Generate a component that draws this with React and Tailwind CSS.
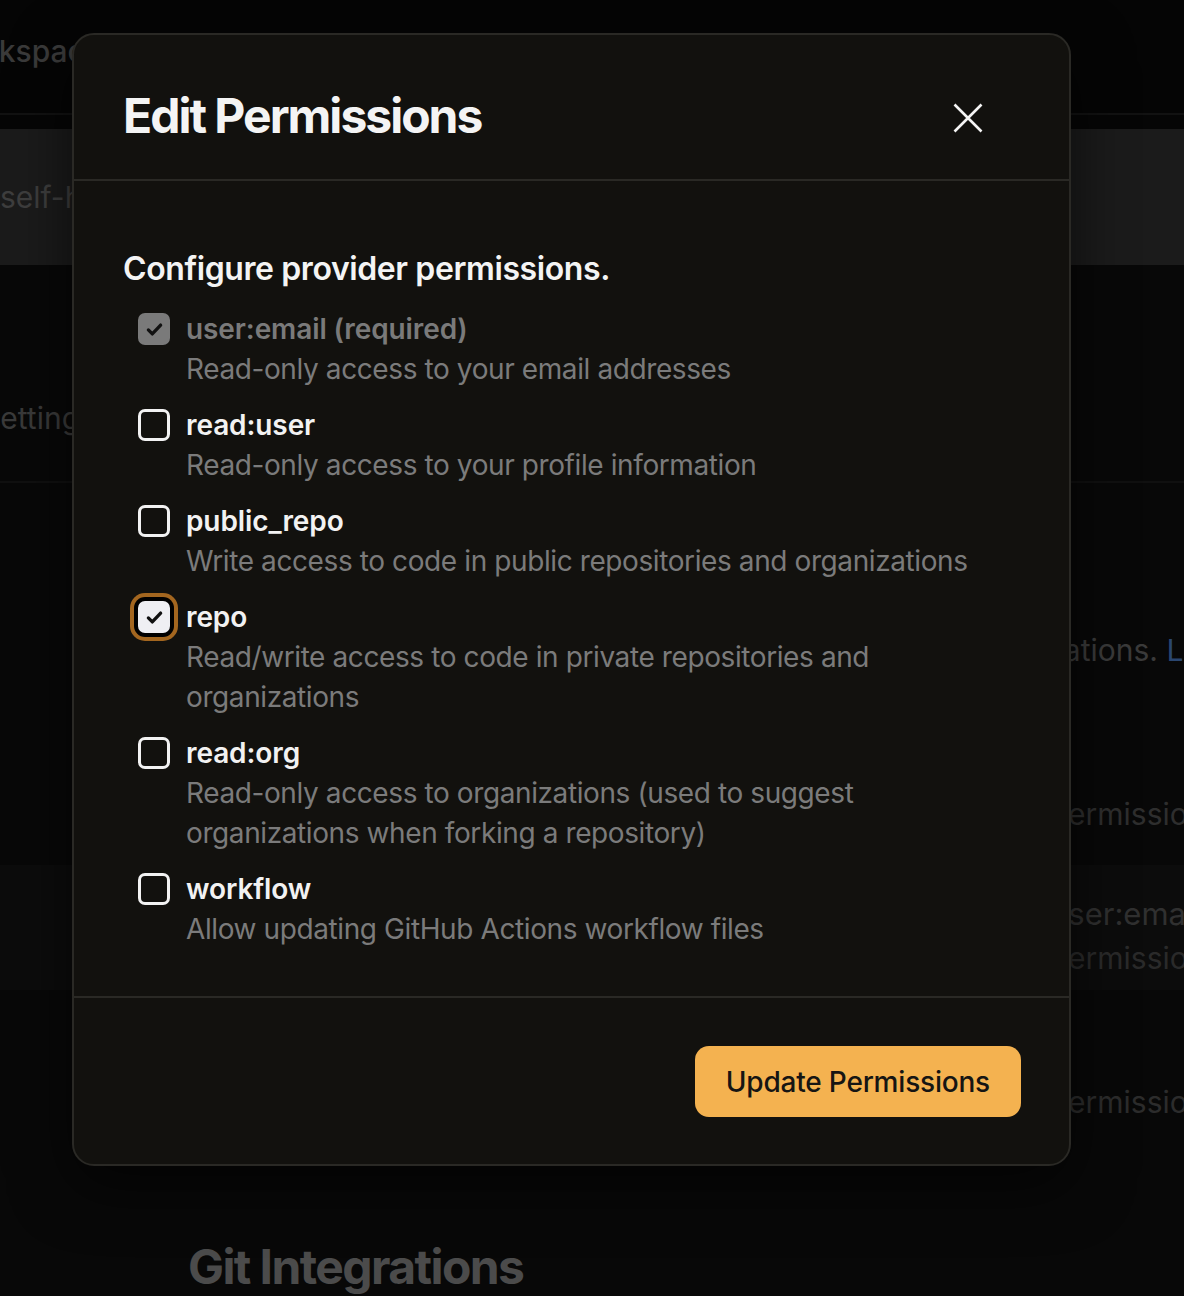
import React from "react";

const items = [
  { name: "user:email (required)", desc: "Read-only access to your email addresses", state: "disabled" },
  { name: "read:user", desc: "Read-only access to your profile information", state: "off" },
  { name: "public_repo", desc: "Write access to code in public repositories and organizations", state: "off" },
  { name: "repo", desc: "Read/write access to code in private repositories and organizations", state: "focused" },
  { name: "read:org", desc: "Read-only access to organizations (used to suggest organizations when forking a repository)", state: "off" },
  { name: "workflow", desc: "Allow updating GitHub Actions workflow files", state: "off" },
];

function Check({ color }) {
  return (
    <svg width="21" height="21" viewBox="0 0 24 24" fill="none">
      <path d="M5 12.5 L9.5 17 L19 7" stroke={color} strokeWidth="3.8" strokeLinecap="round" strokeLinejoin="round" />
    </svg>
  );
}

function Box({ state }) {
  if (state === "disabled") {
    return (
      <div className="w-[32px] h-[32px] rounded-[7px] bg-[#7a7a7a] flex items-center justify-center shrink-0 mt-[4px]">
        <Check color="#111111" />
      </div>
    );
  }
  if (state === "focused") {
    return (
      <div className="w-[32px] h-[32px] rounded-[7px] bg-[#efeff3] flex items-center justify-center shrink-0 mt-[4px] ring-4 ring-[#a3661f] ring-offset-4 ring-offset-black">
        <Check color="#111111" />
      </div>
    );
  }
  return <div className="w-[32px] h-[32px] rounded-[7px] border-[3px] border-[#f2f2f2] shrink-0 mt-[4px]" />;
}

export default function App() {
  return (
    <div
      className="relative w-[1184px] h-[1296px] overflow-hidden bg-[#080808] text-[#3a3a3a]"
      style={{ fontFamily: "Inter, 'Noto Sans', sans-serif" }}
    >
      {/* background page */}
      <div className="flex flex-col">
        <div className="h-[113px] bg-[#050505] flex items-center pb-[12px]">
          <span className="ml-[-60px] text-[30px] font-medium text-[#3a3a3a] whitespace-nowrap leading-[40px]">Workspaces</span>
        </div>
        <div className="h-[2px] bg-[#121212]" />
        <div className="h-[14px] bg-[#060606]" />
        <div className="h-[136px] bg-[#1b1b1b] flex items-center">
          <span className="text-[30px] text-[#3e3e3e] whitespace-nowrap leading-[40px]">self-hosted</span>
        </div>
        <div className="h-[218px] flex flex-col justify-end pb-[43px] border-b-2 border-[#101010]">
          <span className="ml-[-19px] text-[30px] text-[#3a3a3a] whitespace-nowrap leading-[40px]">Settings</span>
        </div>
        <div className="h-[382px] flex flex-col pt-[147px] gap-[124px]">
          <span className="ml-[1040px] text-[30px] text-[#3a3a3a] whitespace-nowrap leading-[40px]">
            izations. <span className="text-[#2a4670]">Learn more</span>
          </span>
          <span className="ml-[1049px] text-[30px] text-[#2e2e2e] whitespace-nowrap leading-[40px]">Permissions</span>
        </div>
        <div className="h-[125px] bg-[#0c0c0c] flex flex-col pt-[29px] gap-[4px]">
          <span className="ml-[1050px] text-[31px] text-[#303030] whitespace-nowrap leading-[40px]">user:email</span>
          <span className="ml-[1049px] text-[30px] text-[#2a2a2a] whitespace-nowrap leading-[40px]">Permissions</span>
        </div>
        <div className="h-[306px] flex flex-col pt-[92px] gap-[117px]">
          <span className="ml-[1049px] text-[30px] text-[#2c2c2c] whitespace-nowrap leading-[40px]">Permissions</span>
          <span className="ml-[188px] text-[48px] font-bold text-[#4b4b4b] whitespace-nowrap leading-[56px] tracking-[-1.6px]">Git Integrations</span>
        </div>
      </div>

      {/* modal */}
      <div className="absolute left-[72px] top-[33px] w-[999px] rounded-[22px] border-2 border-[#2a2925] bg-[#12110e] shadow-[0_20px_60px_rgba(0,0,0,0.6)] flex flex-col">
        <div className="flex items-start justify-between pl-[49px] pr-[77px] pt-[53px] pb-[35px] border-b-2 border-[#2a2925]">
          <h2 className="text-[48px] leading-[56px] font-bold text-[#f4f4f4] tracking-[-2px]">Edit Permissions</h2>
          <button className="w-[48px] h-[48px] flex items-center justify-center mt-[6px]">
            <svg width="30" height="30" viewBox="0 0 30 30" fill="none">
              <path d="M1.5 1.5 L28.5 28.5 M28.5 1.5 L1.5 28.5" stroke="#f5f5f5" strokeWidth="2.6" />
            </svg>
          </button>
        </div>
        <div className="pl-[49px] pr-[48px] pt-[64px] pb-[47px]">
          <p className="text-[32px] leading-[48px] font-semibold text-[#f4f4f4] tracking-[-0.4px]">Configure provider permissions.</p>
          <div className="mt-[16px] pl-[15px] flex flex-col gap-[16px]">
            {items.map((it) => (
              <div key={it.name} className="flex gap-[16px]">
                <Box state={it.state} />
                <div className="flex flex-col">
                  <span
                    className={
                      "text-[28px] leading-[40px] font-semibold tracking-[-0.1px] " +
                      (it.state === "disabled" ? "text-[#7a7a7a]" : "text-[#f2f2f2]")
                    }
                  >
                    {it.name}
                  </span>
                  <span className="text-[28px] leading-[40px] text-[#7b7b7b] tracking-[-0.4px]">{it.desc}</span>
                </div>
              </div>
            ))}
          </div>
        </div>
        <div className="border-t-2 border-[#2a2925] pt-[48px] pb-[47px] px-[48px] flex justify-end">
          <button className="h-[71px] px-[31px] rounded-[14px] bg-[#f4b250] text-[#161513] text-[28px] font-medium tracking-[-0.2px]">
            Update Permissions
          </button>
        </div>
      </div>
    </div>
  );
}
